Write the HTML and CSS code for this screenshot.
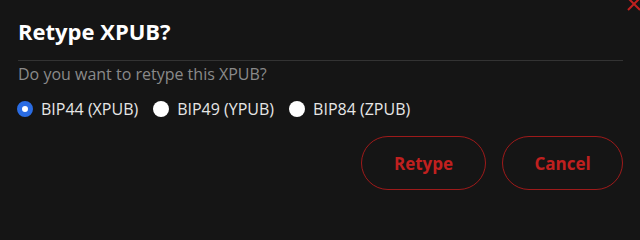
FILE: index.html
```html
<!DOCTYPE html>
<html>
<head>
<meta charset="utf-8">
<link rel="stylesheet" href="styles.css">
</head>
<body>
<div class="dialog">
  <svg class="close" width="14" height="14" viewBox="0 0 14 14"><path d="M1 1L13 13M13 1L1 13" stroke="#c0201f" stroke-width="2" fill="none"/></svg>
  <h1 class="title">Retype XPUB?</h1>
  <div class="divider"></div>
  <p class="subtitle">Do you want to retype this XPUB?</p>
  <div class="options">
    <label class="option"><span class="radio checked"></span>BIP44 (XPUB)</label>
    <label class="option"><span class="radio"></span>BIP49 (YPUB)</label>
    <label class="option"><span class="radio"></span>BIP84 (ZPUB)</label>
  </div>
  <div class="actions">
    <button class="btn">Retype</button>
    <button class="btn">Cancel</button>
  </div>
</div>
</body>
</html>
```
FILE: styles.css
```css
html, body {
  margin: 0;
  padding: 0;
  background: #151515;
  overflow: hidden;
}
body {
  font-family: "Open Sans", "Noto Sans", sans-serif;
  width: 640px;
  height: 200px;
}
.dialog {
  position: relative;
  padding: 16px 17px 0 18px;
}
.close {
  position: absolute;
  left: 627px;
  top: -3px;
}
.title {
  margin: 0;
  font-size: 22px;
  font-weight: 700;
  color: #ffffff;
  line-height: 30px;
}
.divider {
  height: 1px;
  background: #333333;
  margin-top: 14px;
}
.subtitle {
  margin: 3px 0 0;
  font-size: 16px;
  line-height: 20px;
  color: #8a8a8a;
}
.options {
  display: flex;
  gap: 16px;
  margin-top: 15px;
}
.option {
  display: flex;
  align-items: center;
  gap: 8px;
  font-size: 16px;
  line-height: 20px;
  color: #e6e6e6;
}
.radio {
  width: 16px;
  height: 16px;
  border-radius: 50%;
  background: #ffffff;
  box-sizing: border-box;
  margin-left: -1px;
}
.radio.checked {
  background: #fff;
  border: 5px solid #2a6ce3;
}
.actions {
  display: flex;
  justify-content: flex-end;
  gap: 16px;
  margin-top: 17px;
}
.btn {
  font-family: "Open Sans", "Noto Sans", sans-serif;
  font-size: 17px;
  font-weight: 700;
  color: #c0201f;
  background: transparent;
  border: 1px solid #9e1a1a;
  border-radius: 27px;
  height: 54px;
  padding: 0;
}
.btn:first-child { width: 125px; }
.btn:last-child { width: 121px; }
```
